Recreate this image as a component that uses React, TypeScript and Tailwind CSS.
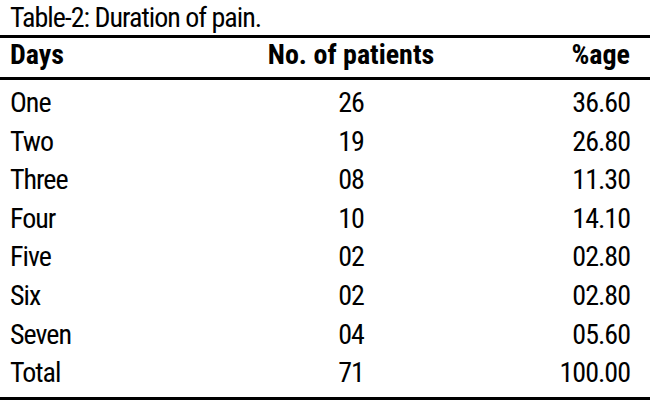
const rows = [
  { day: "One", count: "26", pct: "36.60" },
  { day: "Two", count: "19", pct: "26.80" },
  { day: "Three", count: "08", pct: "11.30" },
  { day: "Four", count: "10", pct: "14.10" },
  { day: "Five", count: "02", pct: "02.80" },
  { day: "Six", count: "02", pct: "02.80" },
  { day: "Seven", count: "04", pct: "05.60" },
  { day: "Total", count: "71", pct: "100.00" },
];

export default function App() {
  return (
    <div className="w-[650px] h-[406px] bg-white text-black font-['Roboto_Condensed','Liberation_Sans',sans-serif] overflow-hidden">
      <div className="h-[35px] pl-[10px] text-[28px] leading-[35px] tracking-[-1px]">
        Table-2: Duration of pain.
      </div>

      <div className="border-t-[3px] border-b-[3px] border-black h-[45px] pl-[10px] pr-[20px] grid grid-cols-[241px_200px_1fr] text-[28px] leading-[33px] font-bold">
        <div>Days</div>
        <div className="text-center">No. of patients</div>
        <div className="text-right">%age</div>
      </div>

      <div className="pt-[4px] pb-[4px] border-b-[3px] border-black">
        {rows.map((r) => (
          <div
            key={r.day}
            className="h-[38.6px] pl-[10px] pr-[20px] grid grid-cols-[241px_200px_1fr] text-[28px] leading-[38.6px] tracking-[-1px]"
          >
            <div>{r.day}</div>
            <div className="text-center">{r.count}</div>
            <div className="text-right">{r.pct}</div>
          </div>
        ))}
      </div>
    </div>
  );
}
